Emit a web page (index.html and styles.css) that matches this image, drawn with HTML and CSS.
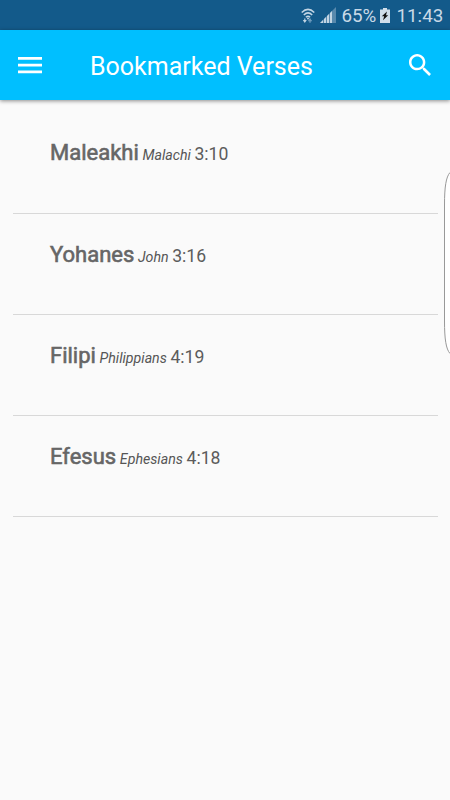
FILE: index.html
```html
<!DOCTYPE html>
<html lang="id">
<head>
<meta charset="utf-8">
<title>Bookmarked Verses</title>
<link rel="stylesheet" href="styles.css">
</head>
<body>
<div class="status">
  <svg class="wifi" width="14" height="16" viewBox="0 0 14 16" fill="none" stroke="#c2d5e4" stroke-width="1.5"><path d="M.7 4.5Q7-1.7 13.3 4.5M2.8 7Q7 2.8 11.2 7M4.9 9.3Q7 7.2 9.1 9.3"/><circle cx="7" cy="10.4" r="1" fill="#c2d5e4" stroke="none"/><path d="M1.8 12h4L3.8 15z" fill="#c2d5e4" stroke="none"/><path d="M3.8 10.5v3" stroke-width="1.2"/><path d="M7.5 13h3L9 10.6zM9 12v3" stroke="#6f9bbd" stroke-width="1" fill="#6f9bbd"/></svg>
  <svg class="signal" width="16" height="16" viewBox="0 0 16 16"><path d="M0 16L16 0v16z" fill="#5889ad"/><path d="M0 16l3-3v3zM4 12l2-2v6H4zM7 9l2-2v9H7zM10 6l2-2v12h-2z" fill="#c2d5e4"/></svg>
  <span class="percent">65%</span>
  <svg class="battery" width="10" height="15" viewBox="0 0 10 15"><path d="M3 0h4v1.6h3V15H0V1.6h3z" fill="#d0deea"/><path d="M7 3.5L1.8 8.2h2.4L3 12.2l5.2-5H6z" fill="#111"/></svg>
  <span class="clock">11:43</span>
</div>
<header class="appbar">
  <svg class="menu" width="24" height="17" viewBox="0 0 24 17" fill="#fff"><path d="M0 0h24v2.7H0zM0 6.8h24v2.7H0zM0 13.6h24v2.7H0z"/></svg>
  <h1 class="title">Bookmarked Verses</h1>
  <svg class="search" width="22" height="22" viewBox="3 3 17.5 17.5" fill="#fff"><path d="M15.5 14h-.79l-.28-.27C15.41 12.59 16 11.11 16 9.5 16 5.91 13.09 3 9.5 3S3 5.91 3 9.5 5.91 16 9.5 16c1.61 0 3.09-.59 4.23-1.57l.27.28v.79l5 4.99L20.49 19l-4.99-5zm-6 0C7.01 14 5 11.99 5 9.5S7.01 5 9.5 5 14 7.01 14 9.5 11.99 14 9.5 14z"/></svg>
</header>
<main class="list">
  <div class="row"><span class="book">Maleakhi</span> <i class="english">Malachi</i> <span class="verse">3:10</span></div>
  <div class="row"><span class="book">Yohanes</span> <i class="english">John</i> <span class="verse">3:16</span></div>
  <div class="row"><span class="book">Filipi</span> <i class="english">Philippians</i> <span class="verse">4:19</span></div>
  <div class="row"><span class="book">Efesus</span> <i class="english">Ephesians</i> <span class="verse">4:18</span></div>
</main>
<svg class="edge" width="7" height="186" viewBox="0 0 7 186"><path d="M7 2.5C3 7 1.5 17 1.5 35V151C1.5 169 3 179 7 183.5" fill="#fff" stroke="#999" stroke-width="1"/></svg>
</body>
</html>
```
FILE: styles.css
```css
* { box-sizing: border-box; }
body {
  margin: 0;
  width: 450px;
  height: 800px;
  overflow: hidden;
  position: relative;
  background: #fafafa;
  font-family: Roboto, sans-serif;
}
.status {
  display: flex;
  align-items: flex-start;
  height: 30px;
  padding-left: 301px;
  background: #135a8a;
  color: #c8d9e7;
  font-size: 18.8px;
  line-height: 32px;
  white-space: nowrap;
}
.status svg { flex: none; }
.wifi { margin-top: 8px; }
.signal { margin: 7px 0 0 5px; }
.percent { width: 38px; margin-left: 5.5px; }
.battery { margin-top: 8px; }
.clock { margin-left: 7px; }
.appbar {
  display: flex;
  align-items: flex-start;
  height: 70px;
  padding: 0 19.5px 0 18px;
  background: #00bfff;
  box-shadow: 0 1px 4px rgba(0, 0, 0, .45);
  position: relative;
}
.menu { margin-top: 27px; }
.title {
  flex: 1;
  margin: 0 0 0 48px;
  color: #fff;
  font-size: 25px;
  font-weight: 400;
  line-height: 74px;
  white-space: nowrap;
}
.search { margin-top: 23.5px; }
.list { padding: 12.4px 12.5px; }
.row {
  height: 101.2px;
  padding: 24px 0 0 37.5px;
  border-bottom: 1px solid #d8d8d8;
  color: #606060;
  line-height: 34px;
  font-size: 14.5px;
  white-space: nowrap;
}
.book {
  font-size: 22px;
  -webkit-text-stroke: .6px #666;
  color: #666;
}
.english { font-size: 14.2px; color: #555; }
.verse { font-size: 17.6px; color: #5c5c5c; }
.edge { position: absolute; left: 443px; top: 170px; }
```
